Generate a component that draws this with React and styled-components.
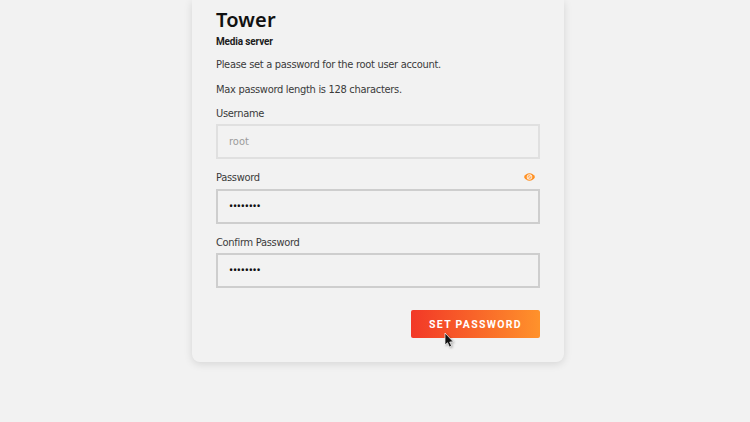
import React from 'react';
import styled, { createGlobalStyle } from 'styled-components';

const GlobalStyle = createGlobalStyle`
  * {
    box-sizing: border-box;
  }

  body {
    margin: 0;
    background: #f2f2f2;
    color: #3a3a3a;
    font-family: "DejaVu Sans Condensed", "Noto Sans", sans-serif;
    font-size: 11px;
    line-height: 16px;
    letter-spacing: -0.3px;
    overflow: hidden;
  }
`;

const Page = styled.main`
  display: flex;
  justify-content: center;
  align-items: flex-start;
  height: 422px;
  padding-left: 6px;
`;

const Card = styled.section`
  width: 372px;
  height: 362px;
  padding: 7px 24px 0;
  border-radius: 0 0 8px 8px;
  background: #f2f2f2;
  box-shadow: 0 2px 8px rgba(0, 0, 0, 0.12);
`;

const Title = styled.h1`
  margin: 0;
  color: #111;
  font-family: "Noto Sans", sans-serif;
  font-size: 20px;
  font-weight: 600;
  line-height: 26px;
  letter-spacing: 0.2px;
`;

const Subtitle = styled.h2`
  margin: 0 0 6px;
  color: #1c1c1c;
  font-family: Roboto, sans-serif;
  font-size: 10px;
  font-weight: 700;
  line-height: 17px;
  letter-spacing: -0.15px;
`;

const Text = styled.p`
  margin: 0 0 6.5px;
  line-height: 18px;
`;

const Field = styled.div`
  margin-bottom: ${props => props.gap}px;
`;

const LabelRow = styled.div`
  display: flex;
  align-items: center;
  justify-content: space-between;
  height: 16px;
  margin-bottom: ${props => props.gap}px;
  padding-right: 5px;
`;

const Label = styled.label`
  padding-top: 2px;
`;

const Input = styled.input`
  display: block;
  width: 100%;
  height: 35px;
  padding: 0 11px;
  border: 2px solid #cecece;
  border-radius: 0;
  outline: none;
  background: transparent;
  color: #111;
  font-family: inherit;
  font-size: 11px;

  &[type='password'] {
    padding-bottom: 2px;
    font-family: "Noto Sans", sans-serif;
    letter-spacing: -0.2px;
  }

  &:disabled {
    padding-bottom: 1px;
    border-color: #e0e0e0;
    color: #9b9b9b;
  }
`;

const EyeButton = styled.button`
  display: flex;
  padding: 0;
  border: 0;
  background: none;
`;

const Actions = styled.div`
  position: relative;
  display: flex;
  justify-content: flex-end;
`;

const SubmitButton = styled.button`
  width: 129px;
  height: 28px;
  padding: 0;
  border: 0;
  border-radius: 2px;
  background: linear-gradient(90deg, #f23827 0%, #ff922b 100%);
  color: #fff;
  font-family: Roboto, sans-serif;
  font-size: 10.5px;
  font-weight: 700;
  letter-spacing: 1.3px;
  text-transform: uppercase;
`;

const Cursor = styled.svg`
  position: absolute;
  top: 23px;
  right: 84px;
  filter: drop-shadow(1px 1px 1px rgba(0, 0, 0, 0.3));
`;

const EyeIcon = () => (
  <svg width="11" height="8" viewBox="0 0 11 8">
    <path d="M0 4C1.2 1.5 3.1.3 5.5.3S9.8 1.5 11 4C9.8 6.5 7.9 7.7 5.5 7.7S1.2 6.5 0 4Z" fill="#ff9022" />
    <circle cx="5.5" cy="4" r="2.4" fill="#ffb066" stroke="#fff0df" strokeWidth=".9" />
    <path d="M3.2 6.3 7.4 2" stroke="#fff5e9" strokeWidth="1" />
  </svg>
);

export default function App() {
  return (
    <Page>
      <GlobalStyle />
      <Card>
        <Title>Tower</Title>
        <Subtitle>Media server</Subtitle>
        <Text>Please set a password for the root user account.</Text>
        <Text>Max password length is 128 characters.</Text>
        <form onSubmit={e => e.preventDefault()}>
          <Field gap={10}>
            <LabelRow gap={3}>
              <Label htmlFor="username">Username</Label>
            </LabelRow>
            <Input id="username" defaultValue="root" disabled />
          </Field>
          <Field gap={10}>
            <LabelRow gap={4}>
              <Label htmlFor="password">Password</Label>
              <EyeButton type="button">
                <EyeIcon />
              </EyeButton>
            </LabelRow>
            <Input id="password" type="password" defaultValue="password" />
          </Field>
          <Field gap={22}>
            <LabelRow gap={3}>
              <Label htmlFor="confirm">Confirm Password</Label>
            </LabelRow>
            <Input id="confirm" type="password" defaultValue="password" />
          </Field>
          <Actions>
            <SubmitButton type="submit">Set Password</SubmitButton>
            <Cursor width="12" height="15" viewBox="0 0 12 15">
              <path d="M1 0v12l2.5-2.3L5.4 14l2.2-1-1.9-4 3.6-.2Z" fill="#111" stroke="#fff" strokeWidth=".7" />
            </Cursor>
          </Actions>
        </form>
      </Card>
    </Page>
  );
}
